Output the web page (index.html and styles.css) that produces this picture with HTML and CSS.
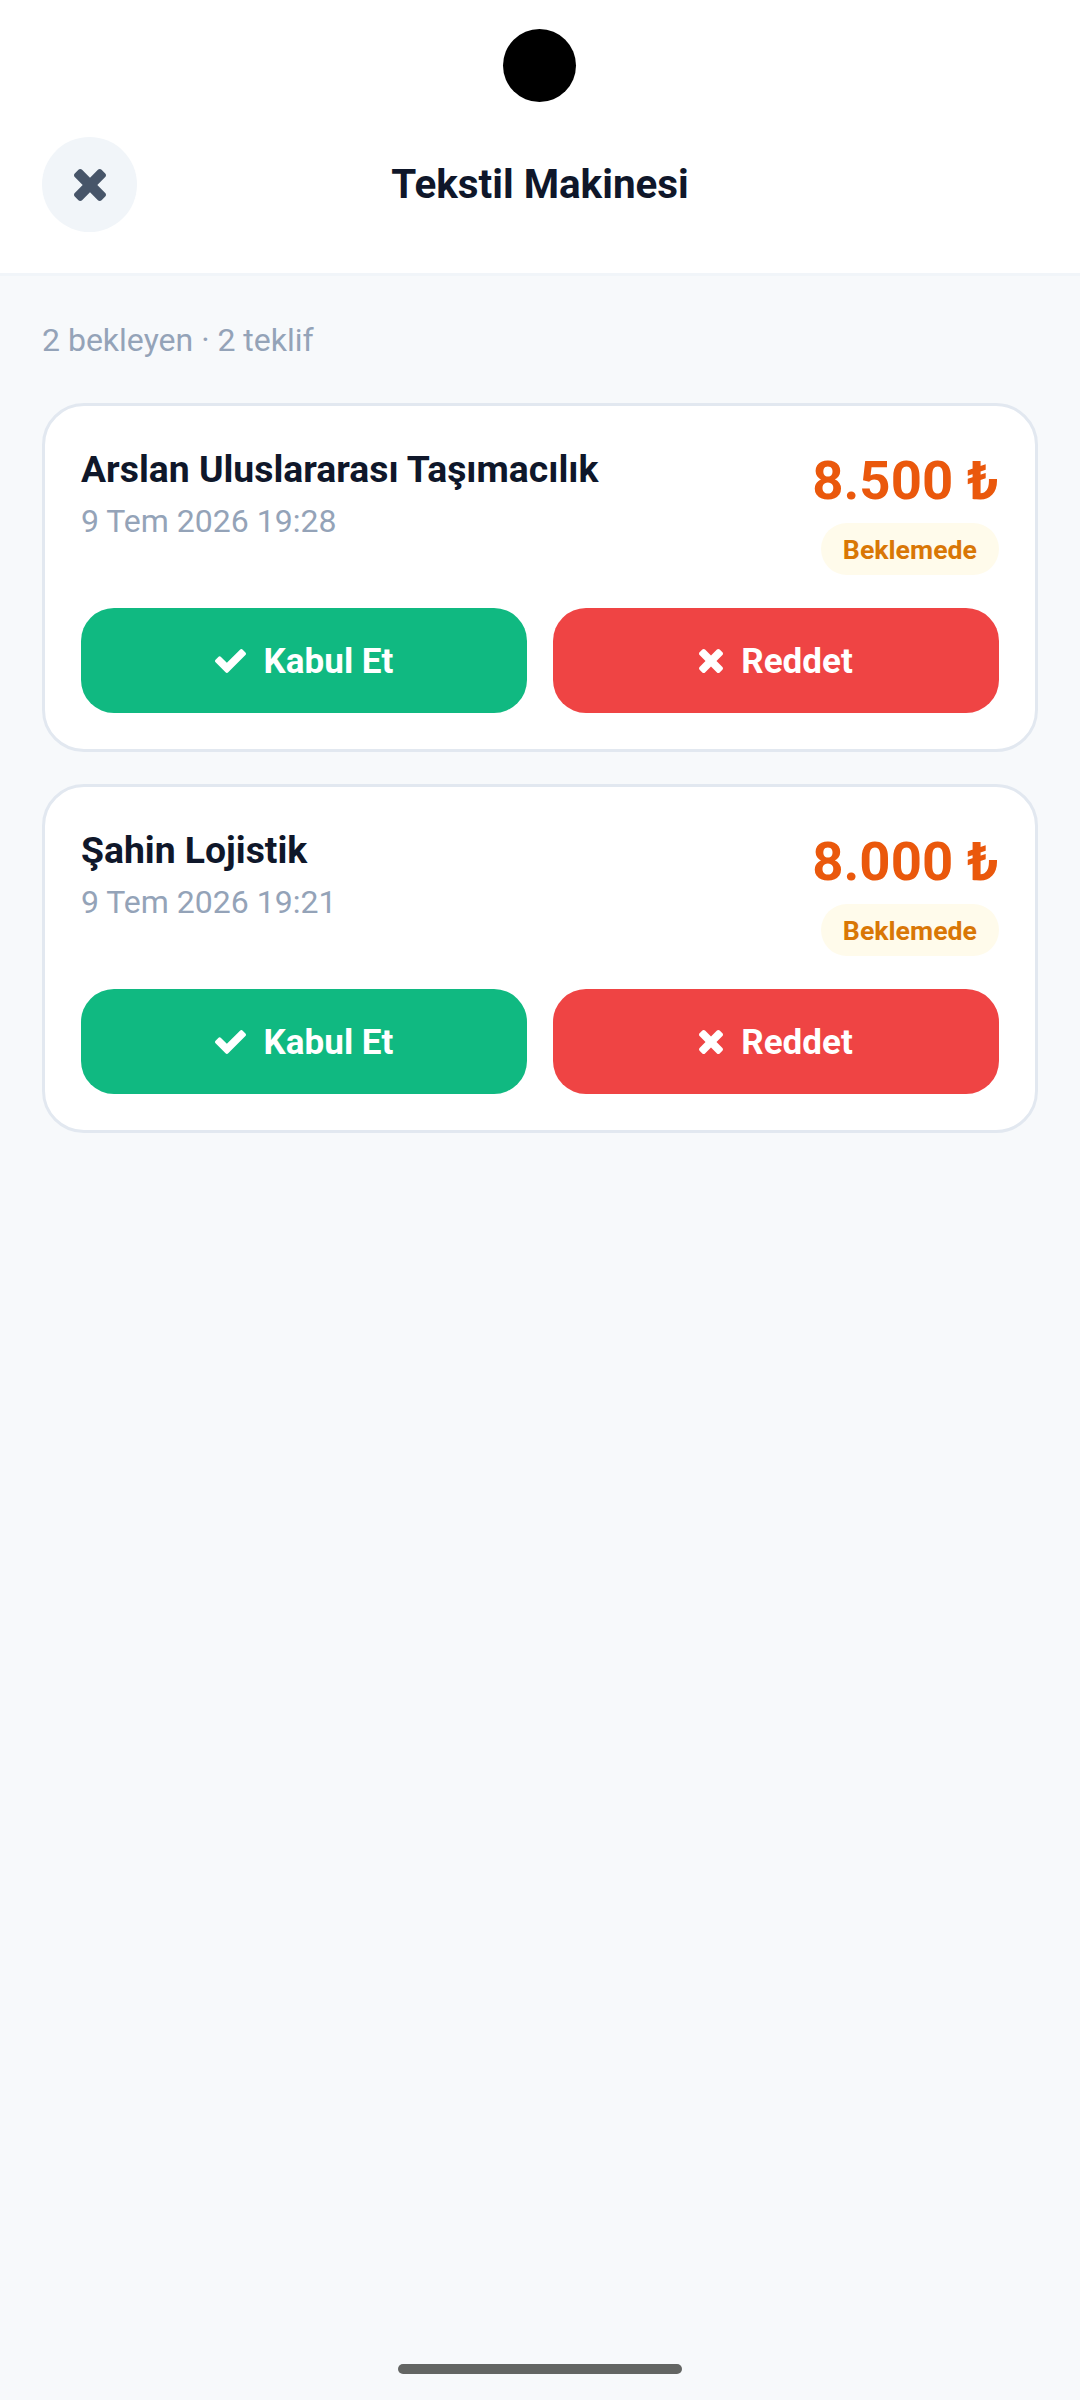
FILE: index.html
```html
<!DOCTYPE html>
<html lang="tr">
<head>
    <meta charset="UTF-8">
    <meta name="viewport" content="width=device-width, initial-scale=1.0">
    <title>Tekstil Makinesi</title>
    <link rel="stylesheet" href="styles.css">
</head>
<body>
    <div class="camera"></div>

    <header class="header">
        <button class="close-btn" aria-label="Kapat">
            <svg class="icon-close" viewBox="110 366 1188 1188"><path d="M1298 1322q0 40-28 68l-136 136q-28 28-68 28t-68-28l-294-294-294 294q-28 28-68 28t-68-28l-136-136q-28-28-28-68t28-68l294-294-294-294q-28-28-28-68t28-68l136-136q28-28 68-28t68 28l294 294 294-294q28-28 68-28t68 28l136 136q28 28 28 68t-28 68l-294 294 294 294q28 28 28 68z"/></svg>
        </button>
        <h1 class="title">Tekstil Makinesi</h1>
        <div class="header-space"></div>
    </header>

    <main class="content">
        <p class="summary">2 bekleyen · 2 teklif</p>

        <section class="card">
            <div class="card-top">
                <div class="card-info">
                    <div class="name">Arslan Uluslararası Taşımacılık</div>
                    <div class="date">9 Tem 2026 19:28</div>
                </div>
                <div class="card-side">
                    <div class="price">8.500 ₺</div>
                    <span class="badge">Beklemede</span>
                </div>
            </div>
            <div class="actions">
                <button class="btn btn-accept">
                    <svg class="icon-check" viewBox="121 334 1550 1188"><path d="M1671 566q0 40-28 68l-724 724-136 136q-28 28-68 28t-68-28l-136-136-362-362q-28-28-28-68t28-68l136-136q28-28 68-28t68 28l294 295 656-657q28-28 68-28t68 28l136 136q28 28 28 68z"/></svg>
                    Kabul Et
                </button>
                <button class="btn btn-reject">
                    <svg class="icon-x" viewBox="110 366 1188 1188"><path d="M1298 1322q0 40-28 68l-136 136q-28 28-68 28t-68-28l-294-294-294 294q-28 28-68 28t-68-28l-136-136q-28-28-28-68t28-68l294-294-294-294q-28-28-28-68t28-68l136-136q28-28 68-28t68 28l294 294 294-294q28-28 68-28t68 28l136 136q28 28 28 68t-28 68l-294 294 294 294q28 28 28 68z"/></svg>
                    Reddet
                </button>
            </div>
        </section>

        <section class="card">
            <div class="card-top">
                <div class="card-info">
                    <div class="name">Şahin Lojistik</div>
                    <div class="date">9 Tem 2026 19:21</div>
                </div>
                <div class="card-side">
                    <div class="price">8.000 ₺</div>
                    <span class="badge">Beklemede</span>
                </div>
            </div>
            <div class="actions">
                <button class="btn btn-accept">
                    <svg class="icon-check" viewBox="121 334 1550 1188"><path d="M1671 566q0 40-28 68l-724 724-136 136q-28 28-68 28t-68-28l-136-136-362-362q-28-28-28-68t28-68l136-136q28-28 68-28t68 28l294 295 656-657q28-28 68-28t68 28l136 136q28 28 28 68z"/></svg>
                    Kabul Et
                </button>
                <button class="btn btn-reject">
                    <svg class="icon-x" viewBox="110 366 1188 1188"><path d="M1298 1322q0 40-28 68l-136 136q-28 28-68 28t-68-28l-294-294-294 294q-28 28-68 28t-68-28l-136-136q-28-28-28-68t28-68l294-294-294-294q-28-28-28-68t28-68l136-136q28-28 68-28t68 28l294 294 294-294q28-28 68-28t68 28l136 136q28 28 28 68t-28 68l-294 294 294 294q28 28 28 68z"/></svg>
                    Reddet
                </button>
            </div>
        </section>
    </main>

    <div class="home-bar"></div>
</body>
</html>
```

FILE: styles.css
```css
* {
    box-sizing: border-box;
}
html, body {
    height: 100%;
}
body {
    margin: 0;
    font-family: Roboto, "Liberation Sans", sans-serif;
    background-color: #f7f9fb;
    color: #0f172a;
    display: flex;
    flex-direction: column;
}
button {
    font-family: inherit;
    border: none;
    cursor: pointer;
}
.camera {
    position: absolute;
    top: 29px;
    left: 503px;
    width: 73px;
    height: 73px;
    border-radius: 50%;
    background-color: #000;
}
.header {
    height: 276px;
    padding: 137px 42px 0;
    display: flex;
    justify-content: space-between;
    background-color: #fff;
    border-bottom: 3px solid #f1f5f9;
}
.close-btn {
    width: 95px;
    height: 95px;
    padding: 0;
    border-radius: 50%;
    background-color: #f1f5f9;
    display: flex;
    align-items: center;
    justify-content: center;
}
.icon-close {
    width: 32px;
    height: 32px;
    fill: #475569;
}
.title {
    margin: 0;
    height: 95px;
    line-height: 95px;
    font-size: 40.4px;
    font-weight: 700;
}
.header-space {
    width: 95px;
}
.content {
    padding: 44px 42px 0;
    display: flex;
    flex-direction: column;
    gap: 32px;
}
.summary {
    margin: 0 0 11px;
    font-size: 32px;
    line-height: 40px;
    color: #94a3b8;
}
.card {
    height: 349px;
    padding: 36px;
    background-color: #fff;
    border: 3px solid #e2e8f0;
    border-radius: 42px;
    display: flex;
    flex-direction: column;
    justify-content: space-between;
}
.card-top {
    display: flex;
    justify-content: space-between;
}
.card-info {
    padding-top: 4px;
}
.name {
    font-size: 37.3px;
    line-height: 46px;
    font-weight: 700;
}
.date {
    margin-top: 9px;
    font-size: 32px;
    line-height: 40px;
    color: #94a3b8;
}
.card-side {
    padding-top: 8px;
    display: flex;
    flex-direction: column;
    align-items: flex-end;
}
.price {
    font-size: 54.5px;
    line-height: 60px;
    font-weight: 700;
    color: #ea580c;
}
.badge {
    margin-top: 13px;
    height: 52px;
    line-height: 54px;
    padding: 0 22px;
    border-radius: 26px;
    font-size: 26.7px;
    font-weight: 700;
    color: #d97706;
    background-color: #fffbeb;
}
.actions {
    display: flex;
    gap: 26px;
}
.btn {
    flex: 1;
    height: 105px;
    padding: 1px 0 0;
    border-radius: 33px;
    font-size: 35px;
    font-weight: 700;
    color: #fff;
    display: flex;
    align-items: center;
    justify-content: center;
    gap: 18px;
}
.btn-accept {
    background-color: #10b981;
}
.btn-reject {
    background-color: #ef4444;
}
.icon-check {
    width: 31px;
    height: 24px;
    fill: #fff;
}
.icon-x {
    width: 24px;
    height: 24px;
    fill: #fff;
}
.home-bar {
    position: absolute;
    left: 398px;
    top: 2364px;
    width: 284px;
    height: 10px;
    border-radius: 5px;
    background-color: #636563;
}
```
